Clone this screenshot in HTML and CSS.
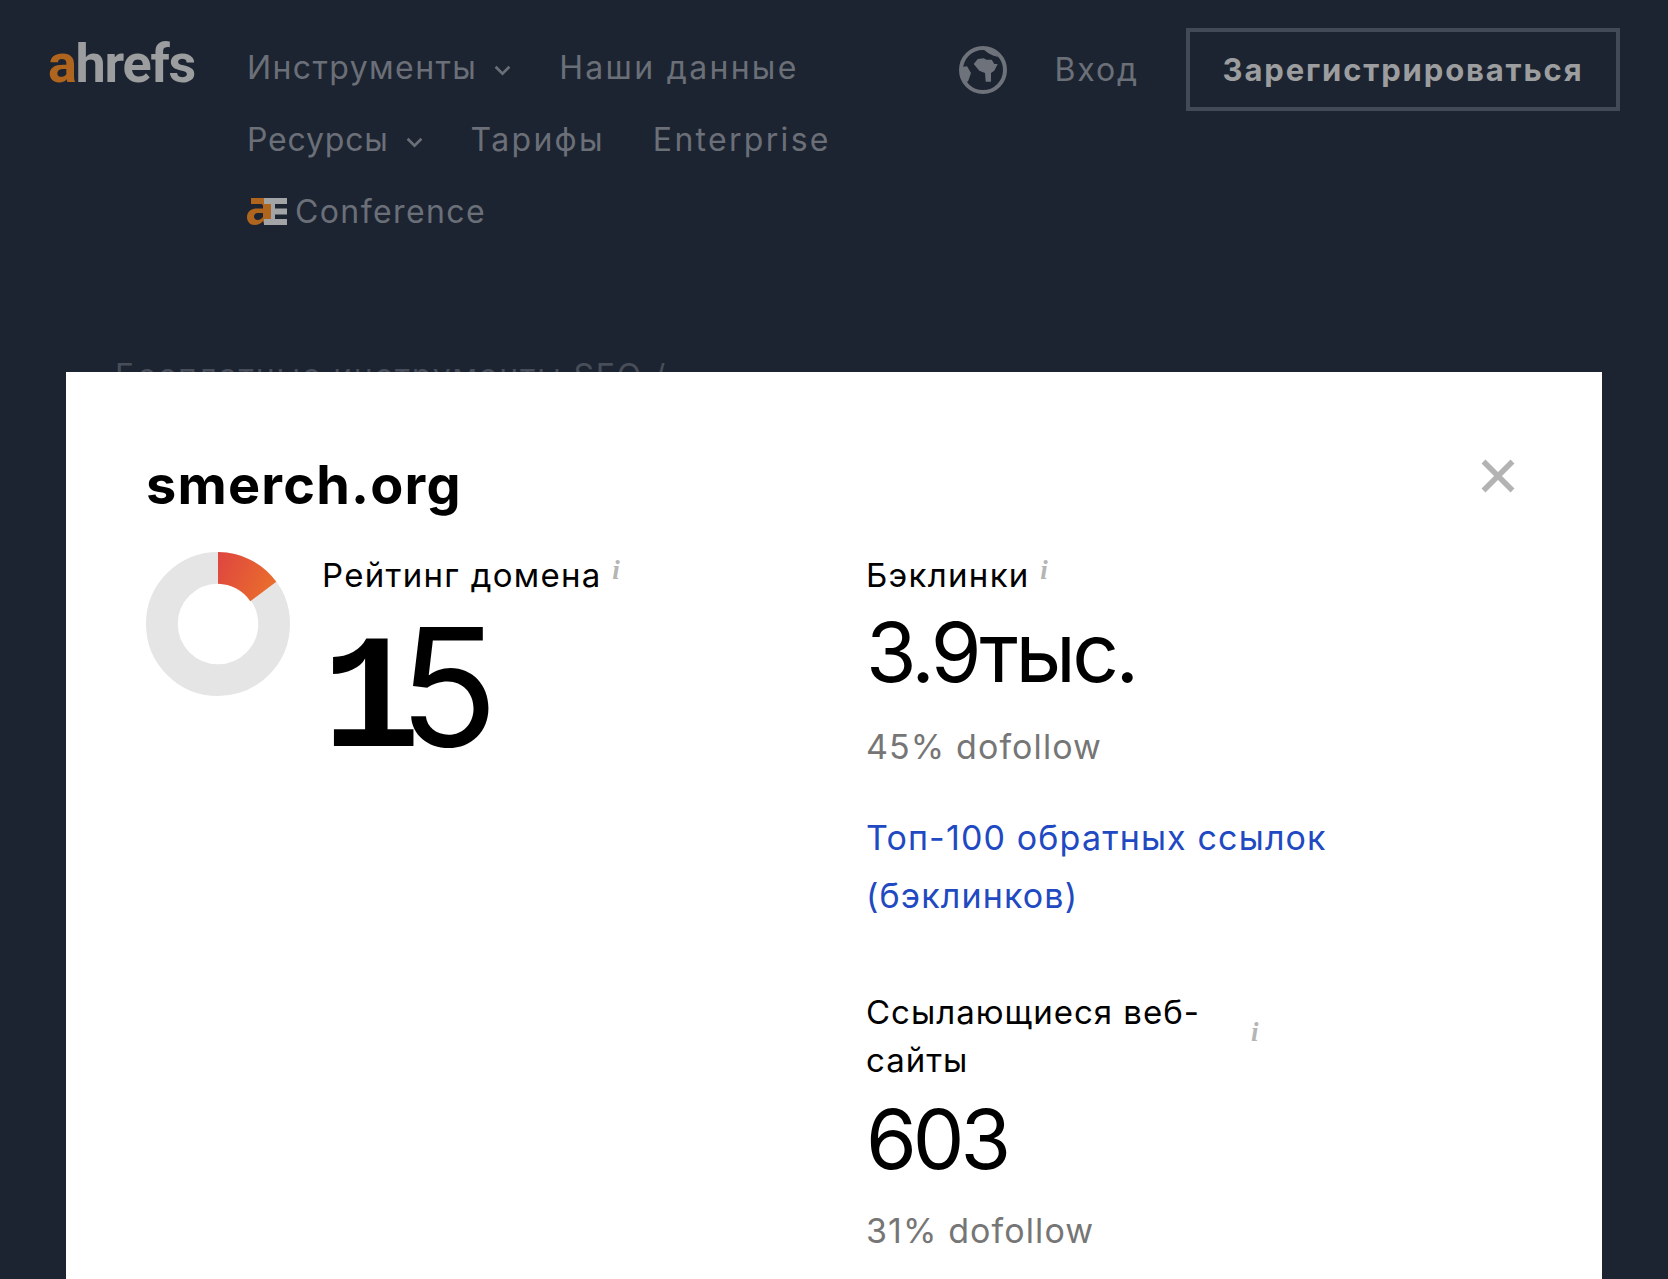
FILE: index.html
```html
<!DOCTYPE html>
<html lang="ru">
<head>
<meta charset="utf-8">
<title>smerch.org</title>
<link rel="stylesheet" href="styles.css">
</head>
<body>
<div class="page">
  <header class="header">
    <a class="logo"><span class="logo-a">a</span>hrefs</a>
    <nav class="nav">
      <div class="nav-row">
        <a class="nav-link">Инструменты <svg class="chev" viewBox="0 0 16 10"><path d="M1.500 1.500 8 8l6.500-6.500"/></svg></a>
        <a class="nav-link nav-link-wide">Наши данные</a>
      </div>
      <div class="nav-row">
        <a class="nav-link nav-link-tight">Ресурсы <svg class="chev" viewBox="0 0 16 10"><path d="M1.500 1.500 8 8l6.500-6.500"/></svg></a>
        <a class="nav-link nav-link-wide">Тарифы</a>
        <a class="nav-link nav-link-wide">Enterprise</a>
      </div>
      <div class="nav-row">
        <a class="nav-link conf">
          <svg class="conf-mark" viewBox="0 0 40 27">
            <path fill="#b0651f" d="M4 0h20v26h-7l-1-3c-2 2.500-5 4-8.500 4C3 27 0 23.500 0 19c0-5 4-8.500 9.500-8.500H16V8c0-1.500-1-2-2.500-2H4z"/>
            <path fill="#1c2431" d="M16 15h-5.500C8.500 15 7 16.500 7 18.500S8.500 22 10.500 22c2.500 0 4.500-1.500 5.500-3z"/>
            <path fill="#a3a4a6" d="M17 0h23v6H17zM24 10.500h16v6H24zM17 21h23v6H17z"/>
            <path fill="#a3a4a6" d="M24 0h4v27h-4z"/>
          </svg>Conference</a>
      </div>
    </nav>
    <div class="actions">
      <svg class="globe" viewBox="0 0 48 48">
        <circle cx="24" cy="24" r="22" fill="none" stroke="#6e727a" stroke-width="4"/>
        <path fill="#6e727a" d="M14.700 18l4-5 6-.7 2.600 1.400h5.400l2.600 4.300h3.400l-3.400 6.700L32 27v8.700h-5.300L26 27l-5.700-2.300zM1 21.300l7-1L12 27l-2.700 7.700-4 4.300-3.500-7zM24 3l5 4 5 2.500 5 1.500-4-6-6-3z"/>
      </svg>
      <a class="login">Вход</a>
      <a class="signup">Зарегистрироваться</a>
    </div>
  </header>
  <div class="crumbs">Бесплатные инструменты SEO /</div>
</div>

<section class="modal">
  <div class="modal-head">
    <h1 class="title">smerch.org</h1>
    <svg class="close" viewBox="0 0 34 34"><path d="M2.500 2.500l29 29M31.500 2.500l-29 29"/></svg>
  </div>
  <div class="columns">
    <div class="col-left">
      <svg class="donut" viewBox="0 0 145 145">
        <defs>
          <linearGradient id="seg" x1="0" y1="0" x2="1" y2="0.400">
            <stop offset="0" stop-color="#de4540"/>
            <stop offset="1" stop-color="#e96b2e"/>
          </linearGradient>
        </defs>
        <circle cx="72.500" cy="72.500" r="56.500" fill="none" stroke="#e5e5e5" stroke-width="32"/>
        <path fill="url(#seg)" d="M72.500 0A72.500 72.500 0 0 1 131.200 30L105 49.500A40.500 40.500 0 0 0 72.500 32z"/>
      </svg>
      <div class="dr">
        <div class="label">Рейтинг домена <i class="info">i</i></div>
        <div class="dr-value"><span class="one">1</span>5</div>
      </div>
    </div>
    <div class="col-right">
      <div class="label">Бэклинки <i class="info">i</i></div>
      <div class="value">3.9тыс.</div>
      <div class="sub">45% dofollow</div>
      <a class="link">Топ-100 обратных ссылок (бэклинков)</a>
      <div class="label-wrap">
        <div class="label label-long">Ссылающиеся веб-сайты</div>
        <i class="info">i</i>
      </div>
      <div class="value value-2">603</div>
      <div class="sub sub-2">31% dofollow</div>
    </div>
  </div>
</section>
</body>
</html>
```
FILE: styles.css
```css
* { box-sizing: border-box; }
html, body { margin: 0; height: 1279px; overflow: hidden; }
body {
  position: relative;
  background: #1c2431;
  font-family: Inter, "Noto Sans", sans-serif;
  color: #000;
}
a { text-decoration: none; }

.header {
  display: flex;
  align-items: flex-start;
  padding: 28px 48px 0 48px;
}
.logo {
  font-family: Roboto, sans-serif;
  font-weight: 700;
  font-size: 54px;
  line-height: 60px;
  width: 199px;
  margin-top: 6px;
  color: #9c9d9f;
  letter-spacing: -1.300px;
}
.logo-a { color: #b0651f; }
.nav { flex: 1; display: flex; flex-direction: column; padding-top: 3px; }
.nav-row { display: flex; gap: 48px; height: 72px; align-items: center; }
.nav-link {
  font-size: 32px;
  letter-spacing: 1.400px;
  color: #6b6f78;
  display: flex;
  align-items: center;
  gap: 17px;
  white-space: nowrap;
}
.nav-link-wide { letter-spacing: 2.300px; }
.nav-link-tight { letter-spacing: 0.800px; }
.chev { width: 17px; height: 11px; fill: none; stroke: #6b6f78; stroke-width: 2.500; margin-top: 6px; }
.conf { gap: 8px; }
.conf-mark { width: 40px; height: 27px; }

.actions { display: flex; align-items: center; height: 83px; }
.globe { width: 48px; height: 48px; margin-right: 47px; }
.login { font-size: 32px; color: #6b6f78; letter-spacing: 1.900px; margin-right: 47px; }
.signup {
  display: flex;
  align-items: center;
  justify-content: center;
  width: 434px;
  height: 83px;
  border: 4px solid #434a57;
  color: #9c9d9f;
  font-size: 31px;
  font-weight: 700;
  letter-spacing: 1.850px;
}
.crumbs {
  margin: 109px 0 0 115px;
  font-size: 32px;
  line-height: 40px;
  color: #474d59;
  letter-spacing: 1.800px;
}

.modal {
  position: absolute;
  left: 66px;
  top: 372px;
  width: 1536px;
  height: 907px;
  background: #fff;
  padding: 78px 80px 0;
}
.modal-head { display: flex; justify-content: space-between; align-items: flex-start; height: 102px; }
.title {
  margin: 0;
  font-size: 54px;
  line-height: 70px;
  font-weight: 700;
  letter-spacing: 1.200px;
}
.close { width: 34px; height: 34px; margin: 9px 7px 0 0; fill: none; stroke: #b3b3b3; stroke-width: 5.500; }
.columns { display: flex; }
.col-left { width: 721px; display: flex; align-items: flex-start; }
.donut { width: 144px; height: 144px; flex: none; }
.dr { margin-left: 32px; margin-top: -1px; }
.label { font-size: 33px; line-height: 48px; letter-spacing: 1.300px; }
.info {
  font-family: "Liberation Serif", serif;
  font-size: 27px;
  font-weight: 700;
  color: #b5b5b5;
  position: relative;
  top: -8px;
  margin-left: 0;
}
.dr-value {
  font-size: 164px;
  line-height: 170px;
  letter-spacing: -6px;
}
.one { font-family: "Liberation Mono", monospace; font-weight: 700; letter-spacing: -22px; }
.col-right { width: 480px; margin-top: -1px; margin-left: -1px; }
.value { font-size: 82px; line-height: 100px; letter-spacing: -3.500px; margin-top: 1px; }
.sub { font-size: 34px; line-height: 48px; color: #767676; margin-top: 20px; letter-spacing: 1.100px; }
.link {
  display: block;
  width: 470px;
  margin-top: 38px;
  font-size: 34px;
  line-height: 58px;
  color: #2049c2;
  letter-spacing: 1.150px;
}
.label-wrap { display: flex; align-items: center; margin-top: 63px; }
.label-long { width: 372px; letter-spacing: 1px; }
.label-wrap .info { top: -4px; margin-left: 13px; }
.value-2 { margin-top: 6px; letter-spacing: -4px; }
.sub-2 { margin-top: 17px; }
```
